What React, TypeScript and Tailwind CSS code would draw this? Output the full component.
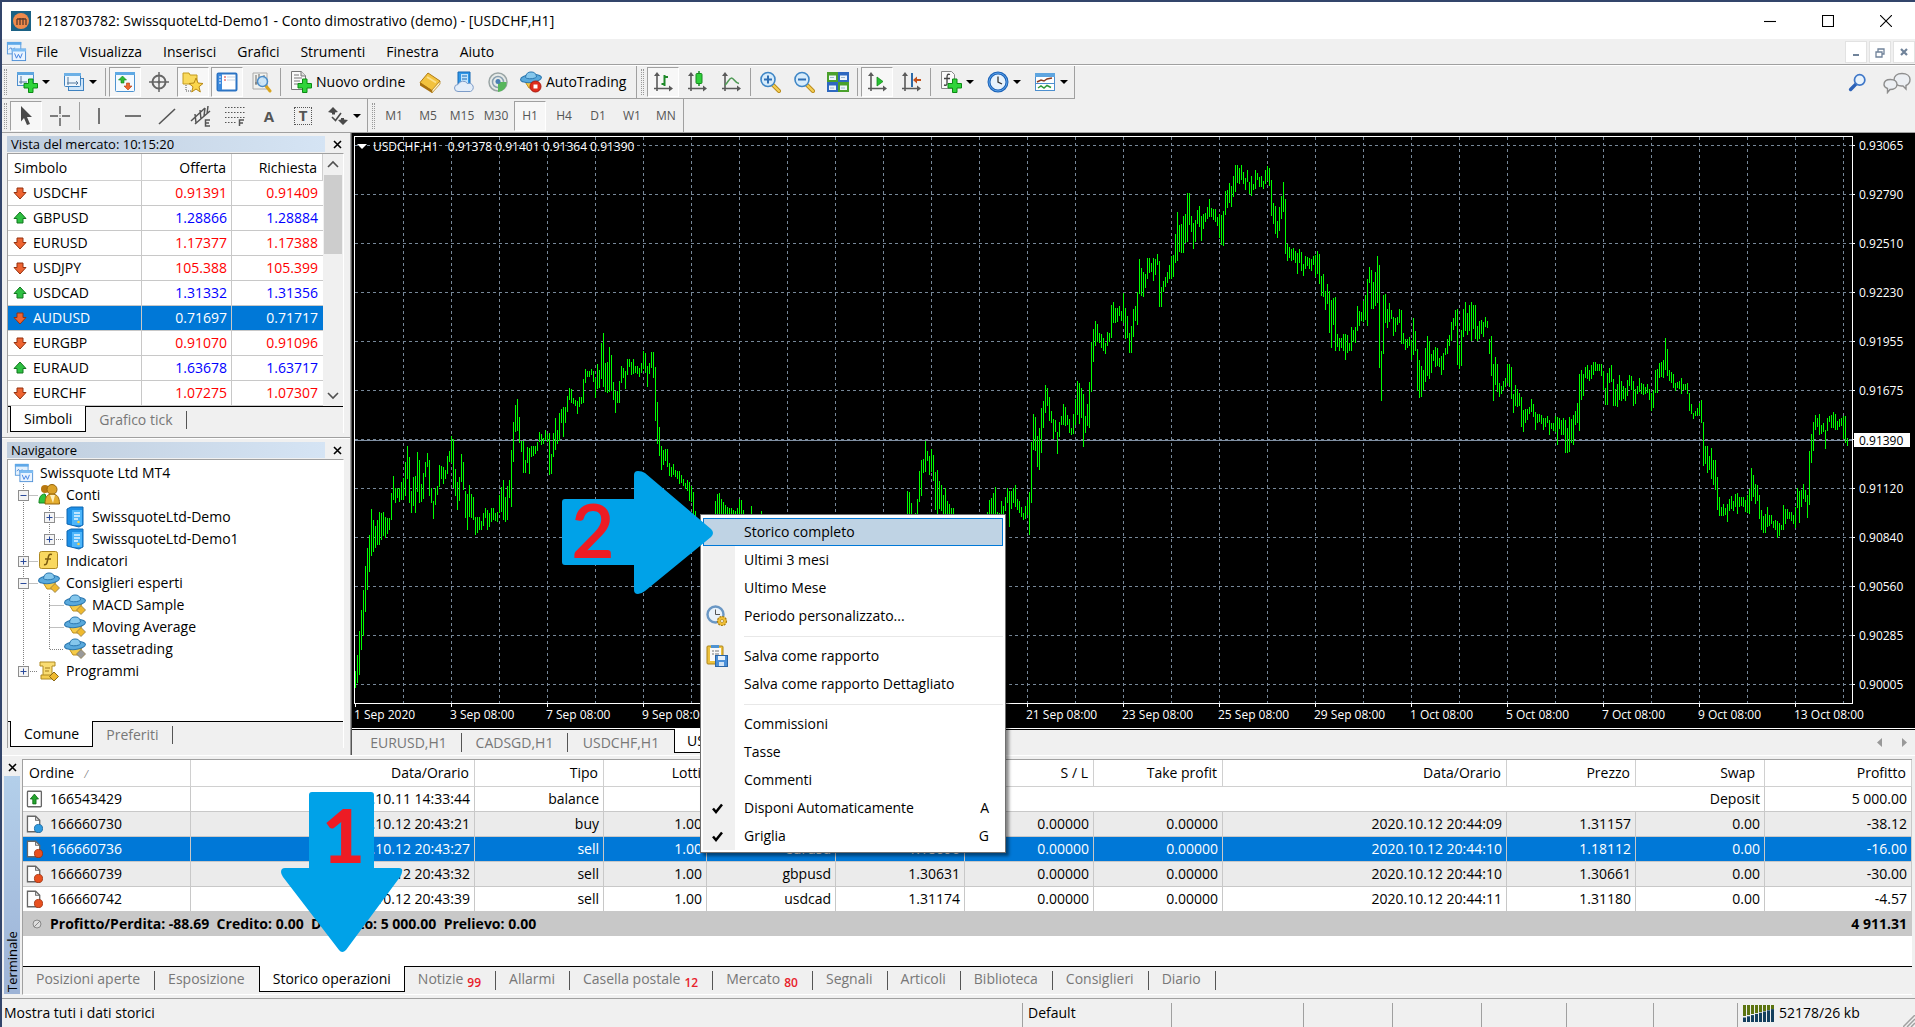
import type { ReactNode } from "react";
import clsx from "clsx";

/* ---------- data ---------- */

const MENUS = ["File", "Visualizza", "Inserisci", "Grafici", "Strumenti", "Finestra", "Aiuto"];

const PERIODS = ["M1", "M5", "M15", "M30", "H1", "H4", "D1", "W1", "MN"];

const QUOTES = [
  { symbol: "USDCHF", bid: "0.91391", ask: "0.91409", up: false },
  { symbol: "GBPUSD", bid: "1.28866", ask: "1.28884", up: true },
  { symbol: "EURUSD", bid: "1.17377", ask: "1.17388", up: false },
  { symbol: "USDJPY", bid: "105.388", ask: "105.399", up: false },
  { symbol: "USDCAD", bid: "1.31332", ask: "1.31356", up: true },
  { symbol: "AUDUSD", bid: "0.71697", ask: "0.71717", up: false, selected: true },
  { symbol: "EURGBP", bid: "0.91070", ask: "0.91096", up: false },
  { symbol: "EURAUD", bid: "1.63678", ask: "1.63717", up: true },
  { symbol: "EURCHF", bid: "1.07275", ask: "1.07307", up: false },
];

const TRADES = [
  { id: "166660730", open: "2020.10.12 20:43:21", type: "buy", symbol: "usdcad", price: "1.31127", close: "2020.10.12 20:44:09", closePrice: "1.31157", profit: "-38.12" },
  { id: "166660736", open: "2020.10.12 20:43:27", type: "sell", symbol: "eurusd", price: "1.18096", close: "2020.10.12 20:44:10", closePrice: "1.18112", profit: "-16.00", selected: true },
  { id: "166660739", open: "2020.10.12 20:43:32", type: "sell", symbol: "gbpusd", price: "1.30631", close: "2020.10.12 20:44:10", closePrice: "1.30661", profit: "-30.00" },
  { id: "166660742", open: "2020.10.12 20:43:39", type: "sell", symbol: "usdcad", price: "1.31174", close: "2020.10.12 20:44:11", closePrice: "1.31180", profit: "-4.57" },
];

const TERMINAL_TABS = [
  { label: "Posizioni aperte" },
  { label: "Esposizione" },
  { label: "Storico operazioni", active: true },
  { label: "Notizie", count: 99 },
  { label: "Allarmi" },
  { label: "Casella postale", count: 12 },
  { label: "Mercato", count: 80 },
  { label: "Segnali" },
  { label: "Articoli" },
  { label: "Biblioteca" },
  { label: "Consiglieri" },
  { label: "Diario" },
];

const PRICES = ["0.93065", "0.92790", "0.92510", "0.92230", "0.91955", "0.91675", "", "0.91120", "0.90840", "0.90560", "0.90285", "0.90005"];

const DATES = [
  "1 Sep 2020", "3 Sep 08:00", "7 Sep 08:00", "9 Sep 08:00", "11 Sep 08:00", "15 Sep 08:00", "17 Sep 08:00", "21 Sep 08:00",
  "23 Sep 08:00", "25 Sep 08:00", "29 Sep 08:00", "1 Oct 08:00", "5 Oct 08:00", "7 Oct 08:00", "9 Oct 08:00", "13 Oct 08:00",
];

// Hourly bars, two units apart: first x, then high-low pairs
const BARS: [number, string][] = [
  [355, "671-688 655-683 631-675 610-650 590-636 566-612 548-590 535-572 509-556 520-552 526-548 520-545 512-545 513-540 512-536 517-538 518-534 518-530 493-520 476-500 488-503 488-498 488-502 482-500 478-500 462-496 446-479 457-503 491-513 477-506 476-513 452-492 460-503 484-502 473-499 462-477 453-467 460-496 488-503 501-519 488-505 486-495 465-487 466-479 467-484 470-479 456-474 451-462 436-463 439-488 469-496 482-510 477-501 454-482 462-490 491-518 494-530 485-517 494-518 497-520 517-535 517-533 517-530 521-530 513-526 508-518 510-530 513-527 508-522 508-520 513-521 512-522 495-513 487-512 480-520 497-522 486-520 480-498"],
  [511, "450-507 422-462 405-432 399-431 417-443 441-452 441-473 460-473 447-463 448-474 446-457 446-456 446-454 442-451 432-442 434-445 438-444 430-440 434-442 433-475 454-474 433-457 418-450 430-444 413-441 409-423 407-437 407-423 396-412 388-400 389-403 398-404 400-406 401-414 397-407 397-404 379-403 369-383 371-377 371-377 369-375 371-382 378-398 364-389 370-388 343-379 333-387 363-392 362-393 347-392 355-391 382-400 391-413 391-403 381-403 366-383 368-378 371-389 359-375 359-367 362-375 359-374 366-373 366-374 368-377 363-373 351-369 353-373 366-387 363-374 352-368 352-378 367-421 402-444 427-456 446-470 450-465 449-461 449-467 463-476 467-477 464-475 470-477 471-479 471-484 475-483 479-486 483-489 480-491 482-501 486-502 492-530 511-540 518-545"],
  [715, "501-525 494-525 493-525 499-525 502-525 505-525 507-525 508-525 508-525 510-525 511-525 508-525 499-525 500-525 510-525"],
  [751, "506-525"],
  [761, "511-525"],
  [907, "491-525 492-525 503-525 514-525 513-525 499-525 471-502 460-496 459-473 441-472 451-461 456-475 449-472 455-481 472-510 470-515 481-509 485-511 495-515 488-515 501-520 504-520 508-520 508-520"],
  [987, "512-525 500-525 498-525 493-525 487-525 512-525 513-525 501-514 506-514 497-511 488-503 491-527 491-509 488-503 485-507 499-510 501-513 507-517 513-520 506-519 500-515 492-535 442-503 414-450 417-451 436-467 428-470 408-453 401-428 385-413 388-406 397-421 411-423 419-439 420-432 432-454 422-437 416-425 404-425 407-426 415-425 419-433 428-435 414-434 399-425 381-415 383-424 388-418 394-447 416-433 404-426 382-428 342-392 329-362 321-346 324-342 333-343 334-348 338-351 343-354 332-346 333-342"],
  [1111, "305-338 302-323 308-323 308-322 306-316 311-321 293-323 308-339 316-338 333-353 326-353 309-337 306-321 292-325 259-294 268-296 272-297 274-288 258-279 258-273 263-272 258-281 259-275 254-265 261-307 287-307 281-292 277-287 272-283 265-279 256-279 255-277 234-263 212-261 225-252 224-253 216-253 214-243 193-242 193-225 216-232 223-249 220-242 210-224 206-227 216-241 214-229 213-222 207-219 199-217 208-217 209-220 209-222 217-226 214-238 215-245 211-246 191-215 190-208 183-203 186-207 176-197 165-192 165-183 168-184 165-180 172-184 178-190 170-182 182-194 176-196 184-190 170-189 173-180 177-187 176-187 181-189 170-184 166-181 168-186"],
  [1271, "180-216 203-224 206-234 221-238 207-231 196-219 182-212 199-254 244-261 247-258 249-261 248-260 251-263 253-274 249-263 252-271 264-276 256-269 257-266 258-269 259-271 256-265 255-277 251-274 254-284 276-296 274-297 291-310 284-304 291-333 300-348 298-325 297-351 334-347 338-351 338-348 334-351 334-360 335-353 343-351 327-351 330-342 327-343 306-331 311-326 312-321 301-322 295-320 279-326 267-283 270-309 282-309 272-306 256-303 265-368 351-401 295-354 294-323 309-328 303-322 310-319 317-336 318-332 317-325 309-323 310-344 333-344 339-350 339-348 337-346 340-360 318-355 331-351 349-391 360-398 366-397 370-390 348-382 336-376 341-379"],
  [1431, "354-373 350-361 347-367 348-366 358-367 356-375 353-370 348-355 339-354 335-346 322-341 318-330 310-326 309-365 345-369 330-366 309-337 302-331 313-335 305-331 302-341 305-329 305-339 326-341 321-339 320-334 322-337 317-327 321-328 339-354 336-376 364-401 357-385 364-392 383-397 386-394 381-390 378-387 364-383 364-387 367-399 394-413 385-406 389-407 393-406 397-427 410-432 409-423 409-420 407-414 399-412 404-417 412-430 414-423 414-422 415-424 418-430 418-427 416-423 420-435 423-429 423-431 416-432 417-445 418-429 420-435 418-435 420-453 428-453 417-452 419-443 415-445 411-425 403-423"],
  [1579, "374-431 370-400 374-396 367-378 365-379 370-381 365-379 362-375 362-371 364-371 364-371 364-376 371-390 388-405 373-405 368-383 365-382 379-406 389-406 384-407 375-400 381-401 386-399 388-401 380-396 375-386 376-390 381-406 389-404 386-394 378-392 383-394 384-395 387-394 384-393 389-400 393-411 390-408 370-393 369-393 363-378 362-377 360-378 338-370 349-376 370-381 372-383 374-388 383-391 382-388 381-389 378-394 384-390 384-390 383-394 393-411 404-414 413-419 411-416 408-416 403-415 400-423 422-466 446-464 446-473 456-470 448-479 460-485 460-490 477-510 497-516 507-516 504-516 508-515 504-522 499-511 496-509 501-511 494-507 493-514"],
  [1739, "497-507 497-506 497-507 500-512 495-513 489-514 468-501 475-497 484-504 485-501 495-519 510-530 516-533 514-533 507-527 515-526 515-524 521-528 520-530 521-538 523-536 525-530 505-530 509-524 509-519 512-519 512-521 515-524 507-528 488-508 491-523 490-507 484-499 490-502 495-518 451-505 434-463 422-451 415-430 418-427 414-435 425-434 423-432 430-449 418-431 416-422 415-428 412-428 414-430 421-430 419-427 418-426 416-439 416-443 438-446"],
];

const BAR_PATH = BARS.map(([start, pairs]) =>
  pairs
    .split(" ")
    .map((pair, i) => {
      const [high, low] = pair.split("-");
      return `M${start + i * 2 + 0.5} ${high}V${low}`;
    })
    .join("")
).join("");

/* ---------- icons ---------- */

function Icon({ size = 22, children }: { size?: number; children: ReactNode }) {
  return (
    <svg width={size} height={size} viewBox="0 0 22 22" fill="none" className="shrink-0" aria-hidden="true">
      {children}
    </svg>
  );
}

function Plus({ x, y }: { x: number; y: number }) {
  return (
    <path
      transform={`translate(${x} ${y})`}
      d="M4.5 0h4.500v4.500H13.500V9H9v4.500H4.500V9H0V4.500h4.500z"
      fill="#2fd43a"
      stroke="#0c8a14"
    />
  );
}

function Caret() {
  return (
    <svg width="8" height="4" viewBox="0 0 8 4" className="shrink-0" aria-hidden="true">
      <path d="M0 0h8L4 4z" fill="#000" />
    </svg>
  );
}

function ChartWindows({ size = 20 }: { size?: number }) {
  return (
    <Icon size={size}>
      <rect x="1.5" y="1.5" width="14" height="12" fill="#e4f1fd" stroke="#5a9bdc" />
      <path d="M1 1h15v3H1z" fill="#5fa8e8" />
      <path d="M3 9l2-2 2 3 2-3" stroke="#4a7fd0" />
      <rect x="6.5" y="8.5" width="14" height="12" fill="#eaf4ff" stroke="#4d8fd6" />
      <path d="M6 8h15v3H6z" fill="#7dbcf2" />
      <path d="M9 13l2 5 2-4 2 4 2-5" stroke="#3f7fe0" />
    </Icon>
  );
}

const Axes = () => (
  <>
    <path d="M5 3v17M2 17.5h17" stroke="#5a5a5a" strokeWidth="1.6" />
    <path d="M5 1l3 4H2zM21 17.5l-4 3v-6z" fill="#5a5a5a" />
  </>
);

const NewChartIcon = () => (
  <Icon>
    <rect x="1.5" y="1.5" width="16" height="13" fill="#eaf4fd" stroke="#4d8fce" />
    <path d="M1 1h17v3H1z" fill="#5ea5e0" />
    <path d="M5 5v8M3 11h8" stroke="#54789c" />
    <Plus x={8} y={8} />
  </Icon>
);

const ProfilesIcon = () => (
  <Icon>
    <rect x="5.5" y="7.5" width="15" height="12" fill="#cfe5f8" stroke="#3f82c0" />
    <rect x="1.5" y="2.5" width="16" height="13" rx="1" fill="#eef6fd" stroke="#3f82c0" />
    <path d="M1 2h17v3H1z" fill="#6cb0e6" />
    <path d="M5 6v8M4 12h11M13 10l2 2-2 2" stroke="#54789c" />
  </Icon>
);

const MarketWatchIcon = () => (
  <Icon>
    <rect x="1.5" y="1.5" width="19" height="19" rx="1" fill="#f4faff" stroke="#4d93d0" />
    <path d="M1 1h20v3H1z" fill="#5ea9e4" />
    <path d="M8.500 5l4 4H10v3H7V9H4.500z" fill="#2dbb35" stroke="#118419" strokeWidth=".6" />
    <path d="M14 19l-4-4h2.500v-3h3v3H18z" fill="#f0682c" stroke="#b03a10" strokeWidth=".6" />
  </Icon>
);

const CrosshairIcon = () => (
  <Icon>
    <circle cx="11" cy="11" r="6.500" stroke="#666" strokeWidth="2" />
    <path d="M11 1v20M1 11h20" stroke="#666" strokeWidth="1.500" />
    <circle cx="11" cy="11" r="1.500" fill="#666" />
  </Icon>
);

const NavigatorIcon = () => (
  <Icon>
    <path d="M1 3V2h6l1 2h7v9H1z" fill="#f9d95c" stroke="#c39a1c" />
    <path d="M4 14v6h5" stroke="#555" strokeDasharray="1 1" />
    <path d="M14 7l2 5 5 .5-4 3.300 1.300 5.200-4.300-3-4.300 3 1.300-5.200-4-3.300 5-.5z" fill="#fbd54a" stroke="#b88916" />
  </Icon>
);

const TerminalIcon = () => (
  <Icon>
    <rect x="1.500" y="2.500" width="19" height="17" rx="1" fill="#fff" stroke="#2c74c4" strokeWidth="2" />
    <path d="M2 3h4v16H2z" fill="#3c8ade" />
    <path d="M3 6h2M3 9h2M3 12h2" stroke="#fff" />
    <path d="M8 6h2M8 9h2" stroke="#d33" />
    <path d="M11 6h8M11 9h8" stroke="#c3d3e4" />
  </Icon>
);

const TesterIcon = () => (
  <Icon>
    <path d="M3 2h14v16H3z" fill="#f2f2ee" stroke="#aaa" />
    <path d="M6 4v10M9 3v5M14 4v4M5 12h6" stroke="#666" />
    <path d="M16 15l4 5" stroke="#d9a520" strokeWidth="3" strokeLinecap="round" />
    <circle cx="12.500" cy="10.500" r="5" fill="#c5e3f8" fillOpacity=".85" stroke="#4b8cc8" strokeWidth="1.500" />
  </Icon>
);

const NewOrderIcon = () => (
  <Icon>
    <path d="M1.500 .5h10l4 4v14h-14z" fill="#fafafa" stroke="#777" />
    <path d="M11 0v5h5" fill="#ddd" stroke="#777" />
    <path d="M4 4h5M4 7h8M4 10h6M4 13h4" stroke="#777" />
    <Plus x={8} y={8} />
  </Icon>
);

const BookIcon = () => (
  <Icon>
    <path d="M1 11.500L9 2l12 8-8 10z" fill="#f2c23e" stroke="#b07b14" />
    <path d="M1 11.500v3l12 7.500v-3z" fill="#a8700f" />
    <path d="M13 19l8-9v3l-8 9z" fill="#fff3c4" stroke="#b07b14" strokeWidth=".7" />
    <path d="M8 6l9 5.500" stroke="#fbe08a" strokeWidth="2" />
  </Icon>
);

const CloudIcon = () => (
  <Icon>
    <path d="M5 1h12v12H5z" fill="#2f97e8" stroke="#1668b4" />
    <path d="M8 3h7v9H8z" fill="#bfe2fb" />
    <path d="M9 5h5M9 8h5" stroke="#1668b4" />
    <path d="M5 20.500a3.500 3.500 0 0 1 0-7 5.500 5.500 0 0 1 9.500-1 4 4 0 0 1 3 8z" fill="#e3edf9" stroke="#7d9cc8" />
  </Icon>
);

const SignalIcon = () => (
  <Icon>
    <circle cx="11" cy="11" r="9" fill="#e6eae8" stroke="#9aa5a5" strokeWidth="1.500" />
    <circle cx="11" cy="11" r="5.500" stroke="#8aa0b0" strokeWidth="1.500" />
    <path d="M11 11h8.500a9 9 0 0 1-8.500 10z" fill="#58b65c" />
    <circle cx="11" cy="10.500" r="2.500" fill="#4a7fb4" />
  </Icon>
);

function ExpertHat({ badge = "#efb92e", stop = false }: { badge?: string; stop?: boolean }) {
  return (
    <Icon>
      <path d="M4 9l5 8h6l3-8z" fill="#f6cb48" stroke="#c08f1a" />
      <ellipse cx="11" cy="7.500" rx="10.500" ry="4" fill="#59a9dc" stroke="#2c78b0" transform="rotate(-6 11 7.500)" />
      <path d="M5.500 6.500C6 2.500 8 1 11 1s5 1 5.500 5c-2 2-9 2.500-11 .5z" fill="#85c7ec" stroke="#2c78b0" />
      {stop ? (
        <>
          <circle cx="15.500" cy="15.500" r="5.500" fill="#df2c1c" stroke="#a81a10" />
          <path d="M13.500 13.500h4v4h-4z" fill="#fff" />
        </>
      ) : (
        <path d="M17 11.500l4.500 4.500-4.500 4.500-4.500-4.500z" fill={badge} stroke="#8d7a46" strokeWidth=".8" />
      )}
    </Icon>
  );
}

const BarsIcon = () => (
  <Icon>
    <Axes />
    <path d="M12.500 4v11M9.500 13h3M12.500 6H16" stroke="#1f8a2a" strokeWidth="2" />
  </Icon>
);

const CandlesIcon = () => (
  <Icon>
    <Axes />
    <path d="M13 0v15" stroke="#178a20" strokeWidth="1.500" />
    <rect x="10" y="2.500" width="6" height="10" rx="1" fill="#2fcf3a" stroke="#178a20" />
  </Icon>
);

const LineIcon = () => (
  <Icon>
    <Axes />
    <path d="M5 14c3-2 4-7 6.500-7S15 12 19 12.500" stroke="#4f9a55" strokeWidth="1.600" />
  </Icon>
);

function ZoomIcon({ plus }: { plus?: boolean }) {
  return (
    <Icon>
      <path d="M14 14l6 6" stroke="#b98a1a" strokeWidth="4" strokeLinecap="round" />
      <path d="M14 14l6 6" stroke="#f5cf55" strokeWidth="2.200" strokeLinecap="round" />
      <circle cx="9" cy="8.500" r="7" fill="#d7ecfb" stroke="#3f86c6" strokeWidth="1.600" />
      <path d="M5 8.500h8" stroke="#2f6fb4" strokeWidth="2" />
      {plus && <path d="M9 4.500v8" stroke="#2f6fb4" strokeWidth="2" />}
    </Icon>
  );
}

const TileIcon = () => (
  <Icon>
    <path d="M0 1h11v10H0zM11 11h11v10H11z" fill="#4aa02c" />
    <path d="M11 1h11v10H11zM0 11h11v10H0z" fill="#2e68c0" />
    <path d="M2 4.500h7v4.500H2zM13 4.500h7v4.500h-7zM2 14.500h7V19H2zM13 14.500h7V19h-7z" fill="#eef5fb" />
    <path d="M3 6.500h4M14 6.500h4M3 17h4M14 17h4" stroke="#9cb8d0" />
  </Icon>
);

const ScrollIcon = () => (
  <Icon>
    <Axes />
    <path d="M11 6l6 4.500-6 4.500z" fill="#27c232" stroke="#148a1c" strokeWidth=".8" />
  </Icon>
);

const ShiftIcon = () => (
  <Icon>
    <Axes />
    <path d="M12 2v14" stroke="#2b6aa8" strokeWidth="2" />
    <path d="M13 9l4-3.500V8h4v2h-4v2.500z" fill="#c2501c" />
  </Icon>
);

const IndicatorsIcon = () => (
  <Icon>
    <path d="M1.500 .5h10l3 3v14h-13z" fill="#fafafa" stroke="#888" />
    <path d="M10 3.500C7 2.500 7 4.500 7 7.500v5c0 2-1 2-3 1.500M4 7.500h6" stroke="#444" strokeWidth="1.300" />
    <Plus x={8} y={8} />
  </Icon>
);

const ClockIcon = () => (
  <Icon>
    <circle cx="11" cy="11" r="9" fill="#e7f2fc" stroke="#1d63b8" strokeWidth="3" />
    <circle cx="11" cy="11" r="9" stroke="#5aa2ea" />
    <path d="M11 5.500V11l4 2" stroke="#333" strokeWidth="1.300" />
  </Icon>
);

const TemplateIcon = () => (
  <Icon>
    <rect x="1.500" y="2.500" width="19" height="17" fill="#fff" stroke="#4d8fce" />
    <path d="M1 2h20v4H1z" fill="#5ea5e0" />
    <path d="M3 11l4-2 3 1 3-2 5-1" stroke="#8a3a20" strokeWidth="1.500" />
    <path d="M1 12.500h20" stroke="#4d8fce" />
    <path d="M4 17l3-2 3 2 3-2.500 4 2" stroke="#2f9a3a" strokeWidth="1.500" />
  </Icon>
);

const CursorIcon = () => (
  <Icon>
    <path d="M6 1l11 11h-5l3 7-3 1-3-7-3 3.500z" fill="#4a4a4a" />
  </Icon>
);

const ThinCrossIcon = () => (
  <Icon>
    <path d="M11 1v8M11 13v8M1 11h8M13 11h8" stroke="#555" strokeWidth="1.400" />
    <path d="M10.500 10.500h1v1h-1z" fill="#555" />
  </Icon>
);

const StrokeIcon = ({ d }: { d: string }) => (
  <Icon>
    <path d={d} stroke="#555" strokeWidth="1.600" />
  </Icon>
);

const FiboIcon = () => (
  <Icon>
    <path d="M1 2.500h20M1 7.500h20M1 12.500h20M1 17.500h12" stroke="#555" strokeDasharray="1.500 1.500" />
    <path d="M15.500 21v-6H20M15.500 18h3.500" stroke="#555" strokeWidth="1.500" />
  </Icon>
);

const ChannelIcon = () => (
  <Icon>
    <path d="M1 16L15 3M5 19L20 6M5 9l1 9M10 5l1 9M15 3l-1 8M18 1l-1 8" stroke="#555" strokeWidth="1.500" />
    <path d="M20 15h-4.500v6H20M15.500 18H19" stroke="#555" strokeWidth="1.500" />
  </Icon>
);

const ArrowsIcon = () => (
  <Icon>
    <path d="M6 2l5 5-3 .5V9.500H5V8L1 7z" fill="#4a4a4a" />
    <path d="M5 12l3.500 3.500L14 8" stroke="#4a4a4a" strokeWidth="1.600" />
    <path d="M16 20l-5-5 3-.5V13h3v1.500l4 .5z" fill="#4a4a4a" />
  </Icon>
);

function TickArrow({ up }: { up: boolean }) {
  return (
    <svg width="14" height="14" viewBox="0 0 14 14" className="shrink-0" aria-hidden="true">
      {up ? (
        <path d="M7 1l6 6.500h-3V12H4V7.500H1z" fill="#2fc043" stroke="#13761f" />
      ) : (
        <path d="M7 13L1 6.500h3V2h6v4.500h3z" fill="#ee6432" stroke="#94310f" />
      )}
    </svg>
  );
}

function OrderIcon({ type }: { type: string }) {
  if (type === "balance") {
    return (
      <Icon size={18}>
        <rect x="3" y="1.500" width="17" height="19" rx="1" fill="#fff" stroke="#666" strokeWidth="1.600" />
        <path d="M11.500 5l5 6h-3v6h-4v-6h-3z" fill="#24a52e" stroke="#0f6d17" />
      </Icon>
    );
  }
  return (
    <Icon size={18}>
      <path d="M3 1.500h10l5 5v14H3z" fill="#fdfdfd" stroke="#666" strokeWidth="1.600" />
      <path d="M13 1.500v5h5" stroke="#666" strokeWidth="1.300" />
      <circle cx="16.500" cy="16.500" r="5" fill={type === "buy" ? "#2f9be0" : "#e8501f"} stroke={type === "buy" ? "#12639f" : "#a02f0b"} />
    </Icon>
  );
}

const AccountsIcon = () => (
  <Icon>
    <circle cx="7" cy="5" r="4" fill="#b9780f" />
    <circle cx="14" cy="5.500" r="5" fill="#dca228" stroke="#96650c" />
    <path d="M1 19c0-6 2-9 6-9l3 9z" fill="#2fc43c" stroke="#168420" />
    <path d="M7 20c0-7 2-10 7-10s7.500 3 7.500 10z" fill="#e4ad2e" stroke="#96650c" />
    <path d="M12 11l3 8 2-8z" fill="#fff0bf" />
  </Icon>
);

const ServerIcon = () => (
  <Icon>
    <path d="M3 3l4-2h12v18l-4 2-12-3z" fill="#1d8fe6" stroke="#0f66b0" />
    <path d="M8 4h10v15H8z" fill="#4db6fb" />
    <path d="M10 7h6M10 10h6M10 13h4" stroke="#e8f6ff" strokeWidth="1.500" />
    <circle cx="14.500" cy="16" r="1.300" fill="#f8d24a" />
  </Icon>
);

const FunctionIcon = () => (
  <Icon>
    <rect x="1.500" y="1.500" width="18" height="17" rx="2" fill="#f9d860" stroke="#b08a22" />
    <path d="M14 4.500c-3-1-3.500 1-4 4l-1 4c-.5 2-1.500 2.500-3 2M7 9h6" stroke="#7a5a10" strokeWidth="1.500" />
  </Icon>
);

const ScriptIcon = () => (
  <Icon>
    <path d="M2 2h15v4h-3v10H5V6H2z" fill="#f9dc72" stroke="#b08a22" />
    <path d="M3 15h11v4H3z" fill="#f4cd50" stroke="#b08a22" />
    <path d="M7 8h5M7 11h4" stroke="#a07a1a" />
    <path d="M16 12l4.500 4.500L16 21l-4.500-4.500z" fill="#efb92e" stroke="#8d6a16" />
  </Icon>
);

const PeriodIcon = () => (
  <Icon>
    <circle cx="9.500" cy="9.500" r="8" fill="#e9f2fa" stroke="#6a97c4" strokeWidth="2.400" />
    <path d="M9.500 4.500v5H14" stroke="#555" />
    <circle cx="16" cy="16" r="4.500" fill="#f0bf35" stroke="#a87c12" strokeWidth="1.200" strokeDasharray="2 1" />
    <circle cx="16" cy="16" r="1.500" fill="#fff" stroke="#a87c12" strokeWidth=".7" />
  </Icon>
);

const ReportIcon = () => (
  <Icon>
    <rect x="1" y="1" width="16" height="18" rx="1" fill="#edc23e" stroke="#ad8418" />
    <path d="M4 3h11v13H4z" fill="#fafafa" />
    <path d="M5 0h8v3H5z" fill="#4f93d2" />
    <path d="M6 6h2M9 6h4M6 9h2M9 9h4" stroke="#777" />
    <rect x="9.500" y="10.500" width="12" height="11" fill="#4a8fd8" stroke="#2a64a4" />
    <path d="M12 11h7v4h-7z" fill="#e7f1fb" />
    <path d="M13 17h5v4h-5z" fill="#cfe2f5" />
  </Icon>
);

/* ---------- shared parts ---------- */

function ToolButton({ label, active, drop, children }: { label: string; active?: boolean; drop?: boolean; children: ReactNode }) {
  return (
    <button
      type="button"
      aria-label={label}
      className={clsx(
        "flex h-[30px] shrink-0 items-center justify-center",
        drop ? "w-[47px] gap-1" : "mx-px w-8",
        active && "border border-[#a0a0a0] border-r-white border-b-white bg-[#f7f7f7]"
      )}
    >
      {children}
      {drop && <Caret />}
    </button>
  );
}

const Grip = () => <span className="mr-0.5 h-[26px] w-[3px] shrink-0 border-x border-dotted border-[#999]" />;
const Divider = () => <span className="mx-0.5 h-7 w-px shrink-0 bg-[#a0a0a0]" />;

function PanelCaption({ title }: { title: string }) {
  return (
    <div className="-mr-[5px] flex h-[18px] items-center">
      <h2 className="h-4 flex-1 bg-linear-to-r from-[#bfcddd] to-[#d5e4f4] pl-1 text-[13px] leading-4">{title}</h2>
      <CloseButton />
    </div>
  );
}

function CloseButton() {
  return (
    <button type="button" aria-label="Chiudi" className="flex w-6 justify-center">
      <svg width="9" height="9" viewBox="0 0 9 9" aria-hidden="true">
        <path d="M1 1l7 7M8 1L1 8" stroke="#000" strokeWidth="1.600" />
      </svg>
    </button>
  );
}

function SideTabs({ active, other }: { active: string; other: string }) {
  return (
    <div className="flex h-[27px] border-t border-black pl-0.5">
      <button type="button" className="-mt-px h-[26px] border border-t-0 border-black bg-white px-[13px] leading-6">{active}</button>
      <button type="button" className="my-1 border-r border-[#555] px-[13px] leading-4 text-[#777]">{other}</button>
    </div>
  );
}

/* ---------- bars at the top ---------- */

function TitleBar() {
  return (
    <header className="flex h-[37px] items-center bg-white pl-[9px] text-[14px]">
      <svg width="20" height="20" viewBox="0 0 20 20" aria-hidden="true">
        <path d="M0 0h20v20H0z" fill="#1b6184" />
        <circle cx="10" cy="10" r="8" fill="#f08a4b" />
        <path d="M6 14V8M9 14V7M12 14V7M15 14V8M6 8h9" stroke="#5b3a2c" strokeWidth="1.300" />
      </svg>
      <h1 className="flex-1 pl-[5px]">1218703782: SwissquoteLtd-Demo1 - Conto dimostrativo (demo) - [USDCHF,H1]</h1>
      {["M0 6.500h12", "M.5 .5h11v11H.5z", "M0 0l12 12M12 0L0 12"].map((d, i) => (
        <button key={d} type="button" aria-label={["Riduci", "Ingrandisci", "Chiudi"][i]} className="flex w-[58px] justify-center">
          <svg width="12" height="12" viewBox="0 0 12 12" fill="none" aria-hidden="true">
            <path d={d} stroke="#000" strokeWidth="1.100" />
          </svg>
        </button>
      ))}
    </header>
  );
}

function MenuBar() {
  return (
    <nav className="flex h-[26px] items-center border-b border-[#a0a0a0] pl-1">
      <ChartWindows size={21} />
      <div className="flex flex-1 gap-[21px] pl-[9px]">
        {MENUS.map((menu) => (
          <button key={menu} type="button">{menu}</button>
        ))}
      </div>
      {["M3 8h6v2H3z", "M2 6h6v5H2zM4 6V3h6v5H8", "M3 3l6 6M9 3l-6 6"].map((d, i) => (
        <button
          key={d}
          type="button"
          aria-label={["Riduci grafico", "Ripristina grafico", "Chiudi grafico"][i]}
          className="mr-0.5 flex h-[22px] w-[22px] items-center justify-center border border-[#e2e2e2] bg-white last:mr-0"
        >
          <svg width="12" height="12" viewBox="0 0 12 12" fill={i === 0 ? "#70839a" : "none"} aria-hidden="true">
            <path d={d} stroke="#70839a" strokeWidth={i === 0 ? 0 : i === 1 ? 1.3 : 2.2} />
          </svg>
        </button>
      ))}
    </nav>
  );
}

function MainToolbar() {
  return (
    <div className="flex h-[34px] items-center border-t border-white">
      <div className="flex h-full items-center border-r border-b border-[#a0a0a0] pl-0.5">
        <Grip />
        <ToolButton label="Nuovo grafico" drop><NewChartIcon /></ToolButton>
        <ToolButton label="Profili" drop><ProfilesIcon /></ToolButton>
        <Divider />
        <ToolButton label="Vista del mercato" active><MarketWatchIcon /></ToolButton>
        <ToolButton label="Finestra dati"><CrosshairIcon /></ToolButton>
        <ToolButton label="Navigatore" active><NavigatorIcon /></ToolButton>
        <ToolButton label="Terminale" active><TerminalIcon /></ToolButton>
        <ToolButton label="Tester di strategia"><TesterIcon /></ToolButton>
        <Divider />
        <button type="button" className="flex w-[130px] items-center gap-1 pl-[7px] whitespace-nowrap">
          <NewOrderIcon />
          Nuovo ordine
        </button>
        <ToolButton label="MetaEditor"><BookIcon /></ToolButton>
        <ToolButton label="VPS"><CloudIcon /></ToolButton>
        <ToolButton label="Segnali"><SignalIcon /></ToolButton>
        <button type="button" className="flex w-[121px] items-center gap-1 pl-[5px] whitespace-nowrap">
          <ExpertHat stop />
          AutoTrading
        </button>
      </div>
      <div className="flex h-full items-center border-r border-b border-[#a0a0a0] pl-1">
        <Grip />
        <ToolButton label="Grafico a barre" active><BarsIcon /></ToolButton>
        <ToolButton label="Candele"><CandlesIcon /></ToolButton>
        <ToolButton label="Linea"><LineIcon /></ToolButton>
        <Divider />
        <ToolButton label="Ingrandisci"><ZoomIcon plus /></ToolButton>
        <ToolButton label="Rimpicciolisci"><ZoomIcon /></ToolButton>
        <ToolButton label="Affianca"><TileIcon /></ToolButton>
        <Divider />
        <ToolButton label="Scorrimento automatico" active><ScrollIcon /></ToolButton>
        <ToolButton label="Spostamento grafico"><ShiftIcon /></ToolButton>
        <Divider />
        <ToolButton label="Indicatori" drop><IndicatorsIcon /></ToolButton>
        <ToolButton label="Periodi" drop><ClockIcon /></ToolButton>
        <ToolButton label="Modelli" drop><TemplateIcon /></ToolButton>
      </div>
      <div className="flex flex-1 items-center justify-end gap-4 pr-1">
        <button type="button" aria-label="Cerca">
          <Icon size={19}>
            <path d="M3 19l7-7" stroke="#2c62b8" strokeWidth="4" strokeLinecap="round" />
            <circle cx="13.500" cy="8" r="6" fill="#e9f3fc" stroke="#3f77c8" strokeWidth="2" />
          </Icon>
        </button>
        <button type="button" aria-label="Comunità">
          <svg width="28" height="22" viewBox="0 0 28 22" fill="#eceff3" stroke="#8e8e8e" strokeWidth="1.400" aria-hidden="true">
            <path d="M11 8c0-4 3-6.500 8-6.500s8 2.500 8 6c0 3-1.500 5-4 6v3.500l-3-3c-5 .5-9-2-9-6z" />
            <path d="M1 12.500c0-3 2.500-5 6.500-5s6.500 2 6.500 5-3 5-7 5l-2.500 3v-4C2 15.500 1 14.500 1 12.500z" />
          </svg>
        </button>
      </div>
    </div>
  );
}

function DrawingToolbar() {
  return (
    <div className="flex h-[34px] items-center border-b border-[#a0a0a0]">
      <div className="flex h-full items-center border-r border-[#a0a0a0] pl-0.5">
        <Grip />
        <ToolButton label="Cursore" active><CursorIcon /></ToolButton>
        <ToolButton label="Mirino"><ThinCrossIcon /></ToolButton>
        <Divider />
        <ToolButton label="Linea verticale"><StrokeIcon d="M11 3v16" /></ToolButton>
        <ToolButton label="Linea orizzontale"><StrokeIcon d="M3 11h16" /></ToolButton>
        <ToolButton label="Linea di tendenza"><StrokeIcon d="M3 19L19 4" /></ToolButton>
        <ToolButton label="Canale equidistante"><ChannelIcon /></ToolButton>
        <ToolButton label="Ritracciamento di Fibonacci"><FiboIcon /></ToolButton>
        <ToolButton label="Testo"><span className="text-[15px] font-bold text-[#555]">A</span></ToolButton>
        <ToolButton label="Etichetta">
          <span className="flex h-[18px] w-[18px] items-center justify-center border border-dotted border-[#555] text-[15px] leading-none font-bold text-[#555]">T</span>
        </ToolButton>
        <ToolButton label="Frecce" drop><ArrowsIcon /></ToolButton>
      </div>
      <div className="flex h-full items-center border-r border-[#a0a0a0] pl-1">
        <Grip />
        {PERIODS.map((period) => (
          <ToolButton key={period} label={period} active={period === "H1"}>
            <span className="text-[12px] font-medium text-[#555]">{period}</span>
          </ToolButton>
        ))}
      </div>
    </div>
  );
}

/* ---------- left column ---------- */

function MarketWatch() {
  return (
    <section className="border-b border-[#a0a0a0] pt-0.5 pr-1.5 pb-1 pl-[5px]">
      <PanelCaption title="Vista del mercato: 10:15:20" />
      <div className="border-t border-l border-[#a0a0a0] border-r border-r-white">
        <div className="flex bg-white">
          <table className="flex-1 border-separate border-spacing-0">
            <thead>
              <tr>
                <th className="h-[27px] w-[134px] border-r border-b border-[#d0d0d0] pt-px pl-1.5 text-left font-normal">Simbolo</th>
                <th className="w-[90px] border-r border-b border-[#d0d0d0] pt-px pr-[5px] text-right font-normal">Offerta</th>
                <th className="border-r border-b border-[#d0d0d0] pt-px pr-[5px] text-right font-normal">Richiesta</th>
              </tr>
            </thead>
            <tbody>
              {QUOTES.map((q) => (
                <tr
                  key={q.symbol}
                  className={clsx(q.selected ? "bg-[#0078d7] text-white" : q.up ? "text-[#0000ff]" : "text-[#ff0000]")}
                >
                  <td className={clsx("h-[25px] border-r border-b border-[#c8c8c8] pl-[5px]", !q.selected && "text-black")}>
                    <span className="flex items-center gap-1.5 leading-5">
                      <TickArrow up={q.up} />
                      {q.symbol}
                    </span>
                  </td>
                  <td className="border-r border-b border-[#c8c8c8] pr-1 text-right leading-5">{q.bid}</td>
                  <td className="border-b border-[#c8c8c8] pr-[5px] text-right leading-5">{q.ask}</td>
                </tr>
              ))}
            </tbody>
          </table>
          <div className="flex w-5 flex-col items-center bg-[#f0f0f0]">
            <svg width="20" height="21" viewBox="0 0 20 21" fill="none" aria-hidden="true">
              <path d="M5 13l5-5 5 5" stroke="#505050" strokeWidth="1.600" />
            </svg>
            <span className="h-[79px] w-[18px] bg-[#cdcdcd]" />
            <span className="flex-1" />
            <svg width="20" height="21" viewBox="0 0 20 21" fill="none" aria-hidden="true">
              <path d="M5 8l5 5 5-5" stroke="#505050" strokeWidth="1.600" />
            </svg>
          </div>
        </div>
        <SideTabs active="Simboli" other="Grafico tick" />
      </div>
    </section>
  );
}

type Node = { label: string; icon: ReactNode; depth: number; mark?: "+" | "-"; last?: boolean };

const NODES: Node[] = [
  { label: "Conti", icon: <AccountsIcon />, depth: 1, mark: "-" },
  { label: "SwissquoteLtd-Demo", icon: <ServerIcon />, depth: 2, mark: "+" },
  { label: "SwissquoteLtd-Demo1", icon: <ServerIcon />, depth: 2, mark: "+", last: true },
  { label: "Indicatori", icon: <FunctionIcon />, depth: 1, mark: "+" },
  { label: "Consiglieri esperti", icon: <ExpertHat />, depth: 1, mark: "-" },
  { label: "MACD Sample", icon: <ExpertHat />, depth: 2 },
  { label: "Moving Average", icon: <ExpertHat />, depth: 2 },
  { label: "tassetrading", icon: <ExpertHat badge="#9a9a9a" />, depth: 2, last: true },
  { label: "Programmi", icon: <ScriptIcon />, depth: 1, mark: "+", last: true },
];

function Guide({ mark, last }: { mark?: "+" | "-"; last?: boolean }) {
  return (
    <svg width="30" height="22" viewBox="0 0 30 22" fill="none" className="shrink-0" aria-hidden="true">
      <path d={last ? "M15.500 0v11.500H30" : "M15.500 0v22M15.500 11.500H30"} stroke="#808080" strokeDasharray="1 1" />
      {mark && <rect x="10.500" y="6.500" width="10" height="10" fill="#f4f4f4" stroke="#8e8e8e" />}
      {mark && <path d={mark === "+" ? "M12.500 11.500h6M15.500 8.500v6" : "M12.500 11.500h6"} stroke="#2a4a9a" />}
    </svg>
  );
}

function Navigator() {
  return (
    <section className="flex flex-1 flex-col border-t border-white pt-0.5 pr-1.5 pb-[7px] pl-[5px]">
      <PanelCaption title="Navigatore" />
      <div className="flex flex-1 flex-col border-t border-r border-l border-[#a0a0a0] border-r-white">
        <ul className="flex-1 bg-white pt-0.5">
          <li className="flex h-[22px] items-center gap-1.5 pl-1.5">
            <ChartWindows />
            Swissquote Ltd MT4
          </li>
          {NODES.map((node) => (
            <li key={node.label} className="flex h-[22px] items-center">
              {node.depth === 2 && (
                <svg width="26" height="22" viewBox="0 0 26 22" className="shrink-0" aria-hidden="true">
                  <path d="M15.500 0v22" stroke="#808080" strokeDasharray="1 1" />
                </svg>
              )}
              <Guide mark={node.mark} last={node.last} />
              {node.icon}
              <span className="pl-1.5">{node.label}</span>
            </li>
          ))}
        </ul>
        <SideTabs active="Comune" other="Preferiti" />
      </div>
    </section>
  );
}

/* ---------- chart ---------- */

function PriceChart() {
  const rows = PRICES.map((_, i) => 145 + i * 49);
  const cols = Array.from({ length: 31 }, (_, i) => 403 + i * 48);
  return (
    <svg viewBox="352 133 1563 595" className="block w-full bg-black font-['Open_Sans',sans-serif]" role="img" aria-label="USDCHF,H1">
      <g shapeRendering="crispEdges" fill="none">
        <path d={rows.map((y) => `M355 ${y + 0.5}H1852`).join("")} stroke="#778899" strokeDasharray="3 3" />
        <path d={cols.map((x) => `M${x + 0.5} 137V703`).join("")} stroke="#778899" strokeDasharray="3 3" />
        <path d="M354 440.500H1852" stroke="#8090a4" />
        <path d={BAR_PATH} stroke="#00ff00" />
        <path d="M354.500 703.500V136.500H1852.500V703.500Z" stroke="#fff" />
        <path d={rows.map((y) => `M1853 ${y + 0.5}h2`).join("")} stroke="#fff" />
        <path d={DATES.map((_, i) => `M${355.5 + i * 96} 704v3`).join("")} stroke="#fff" />
      </g>
      <g fill="#fff" fontSize="12">
        {PRICES.map((price, i) => (
          <text key={i} x="1859" y={150 + i * 49}>{price}</text>
        ))}
        {DATES.map((date, i) => (
          <text key={date} x={354 + i * 96} y="719">{date}</text>
        ))}
        <path d="M357 144h10l-5 5z" />
        <text x="373" y="151">USDCHF,H1&nbsp;&nbsp; 0.91378 0.91401 0.91364 0.91390</text>
      </g>
      <path d="M1854 433h56v14h-56z" fill="#fff" />
      <text x="1859" y="445" fontSize="12" fill="#000">0.91390</text>
    </svg>
  );
}

function ChartTabs() {
  return (
    <div className="flex h-[26px] border-t border-black pl-1">
      {["EURUSD,H1", "CADSGD,H1", "USDCHF,H1"].map((tab) => (
        <button key={tab} type="button" className="my-[3px] w-[106px] border-r border-[#555] text-center leading-4 text-[#777] nth-3:border-r-0">
          {tab}
        </button>
      ))}
      <button type="button" className="-mt-px h-6 w-[107px] border border-t-0 border-black bg-white px-3 text-left leading-5">USDCHF,H1</button>
      <div className="flex flex-1 items-center justify-end gap-5 pr-2">
        <svg width="5" height="9" viewBox="0 0 5 9" aria-hidden="true"><path d="M5 0v9L0 4.500z" fill="#999" /></svg>
        <svg width="5" height="9" viewBox="0 0 5 9" aria-hidden="true"><path d="M0 0v9l5-4.500z" fill="#999" /></svg>
      </div>
    </div>
  );
}

/* ---------- terminal ---------- */

const HEADERS = ["Data/Orario", "Tipo", "Lotti", "Simbolo", "Prezzo", "S / L", "Take profit", "Data/Orario", "Prezzo", "Swap", "Profitto"];

function HistoryTable() {
  const cell = "border-r border-b border-[#c8c8c8] pr-1 text-right";
  return (
    <table className="w-full table-fixed border-separate border-spacing-0 leading-5">
      <colgroup>
        <col className="w-[168px]" />
        <col className="w-[284px]" />
        <col className="w-[129px]" />
        <col className="w-[103px]" />
        <col className="w-[129px]" />
        <col className="w-[129px]" />
        <col className="w-[129px]" />
        <col className="w-[129px]" />
        <col className="w-[284px]" />
        <col className="w-[129px]" />
        <col className="w-[129px]" />
        <col />
      </colgroup>
      <thead>
        <tr>
          <th className="h-[27px] border-r border-b border-[#d0d0d0] pl-1.5 text-left font-normal">
            Ordine <span className="pl-2 text-[10px] text-[#777]">⁄</span>
          </th>
          {HEADERS.map((title, i) => (
            <th
              key={i}
              className={clsx("border-r border-b border-[#d0d0d0] text-right font-normal", title === "Swap" ? "pr-[9px]" : "pr-[5px]")}
            >
              {title}
            </th>
          ))}
        </tr>
      </thead>
      <tbody>
        <tr className="h-[25px]">
          <td className="h-[25px] border-r border-b border-[#c8c8c8] pl-0.5">
            <span className="flex items-center gap-[7px]"><OrderIcon type="balance" />166543429</span>
          </td>
          <td className={cell}>2020.10.11 14:33:44</td>
          <td className={cell}>balance</td>
          <td className={cell} colSpan={8}>Deposit</td>
          <td className={cell}>5 000.00</td>
        </tr>
        {TRADES.map((t) => (
          <tr key={t.id} className={clsx(t.selected ? "bg-[#0078d7] text-white" : "odd:bg-white even:bg-[#ebebeb]")}>
            <td className="h-[25px] border-r border-b border-[#c8c8c8] pl-0.5">
              <span className="flex items-center gap-[7px]"><OrderIcon type={t.type} />{t.id}</span>
            </td>
            <td className={cell}>{t.open}</td>
            <td className={cell}>{t.type}</td>
            <td className={cell}>1.00</td>
            <td className={cell}>{t.symbol}</td>
            <td className={cell}>{t.price}</td>
            <td className={cell}>0.00000</td>
            <td className={cell}>0.00000</td>
            <td className={cell}>{t.close}</td>
            <td className={cell}>{t.closePrice}</td>
            <td className={cell}>0.00</td>
            <td className={cell}>{t.profit}</td>
          </tr>
        ))}
      </tbody>
      <tfoot>
        <tr className="bg-[#c8c8c8] font-bold">
          <td colSpan={11} className="h-6 pl-[9px]">
            <span className="flex items-center gap-2 whitespace-pre">
              <svg width="10" height="10" viewBox="0 0 10 10" fill="none" aria-hidden="true">
                <circle cx="5" cy="5" r="4" fill="#ddd" stroke="#888" />
                <path d="M2 8l6-6" stroke="#888" />
              </svg>
              {"Profitto/Perdita: -88.69  Credito: 0.00  Deposito: 5 000.00  Prelievo: 0.00"}
            </span>
          </td>
          <td className="pr-[5px] text-right">4 911.31</td>
        </tr>
      </tfoot>
    </table>
  );
}

function Terminal() {
  return (
    <section className="flex border-t border-white pt-[3px] pr-[3px]">
      <div className="flex w-5 flex-col items-center border-b border-transparent pt-1">
        <CloseButton />
        <h2 className="mt-1 flex w-4 flex-1 rotate-180 items-start bg-linear-to-t from-[#b3cfea] to-[#9db3d6] pt-0.5 pl-px text-[13px] leading-4 [writing-mode:vertical-rl]">
          Terminale
        </h2>
      </div>
      <div className="min-w-0 flex-1 border-t border-b border-l border-[#a0a0a0] border-b-white">
        <div className="bg-white pb-[30px]">
          <HistoryTable />
        </div>
        <div className="flex h-7 border-t border-black">
          {TERMINAL_TABS.map((tab) =>
            tab.active ? (
              <button key={tab.label} type="button" className="-mt-px h-[26px] border border-t-0 border-black bg-white px-[13px] leading-6">
                {tab.label}
              </button>
            ) : (
              <button
                key={tab.label}
                type="button"
                className="my-1 flex border-r border-[#555] pr-[14px] pl-[13px] leading-4 text-[#777] nth-2:border-r-0"
              >
                {tab.label}
                {tab.count && <span className="pt-1 pl-1 text-[12px] font-semibold text-[#e8202a]">{tab.count}</span>}
              </button>
            )
          )}
        </div>
      </div>
    </section>
  );
}

function StatusBar() {
  const cell = "h-6 border-l border-[#a0a0a0]";
  return (
    <footer className="mt-[3px] flex h-[29px] items-end border-t border-[#a0a0a0]">
      <span className="h-6 flex-1 pl-0.5">Mostra tuti i dati storici</span>
      <span className={clsx(cell, "w-[149px] pl-[5px]")}>Default</span>
      <span className={clsx(cell, "w-[132px]")} />
      <span className={clsx(cell, "w-[89px]")} />
      <span className={clsx(cell, "w-[89px]")} />
      <span className={clsx(cell, "w-[85px]")} />
      <span className={clsx(cell, "w-[87px]")} />
      <span className={clsx(cell, "w-[84px]")} />
      <span className={clsx(cell, "relative flex w-[178px] gap-1 pl-[5px]")}>
        <svg width="32" height="17" viewBox="0 0 32 17" className="mt-0.5" aria-hidden="true">
          {Array.from({ length: 8 }, (_, i) => (
            <g key={i}>
              <path d={`M${i * 4} 0h3v${11 - i}h-3z`} fill="#5c7410" />
              <path d={`M${i * 4} ${12.5 - i * 1.2}h3V17h-3z`} fill="#14405e" />
            </g>
          ))}
        </svg>
        52178/26 kb
        <svg width="12" height="12" viewBox="0 0 12 12" className="absolute right-0 bottom-0" aria-hidden="true">
          <path d="M0 12L12 0M4 12l8-8M8 12l4-4" stroke="#a0a0a0" strokeWidth="1.500" />
        </svg>
      </span>
    </footer>
  );
}

/* ---------- overlays ---------- */

function MenuItem({ label, icon, shortcut, checked, selected }: { label: string; icon?: ReactNode; shortcut?: string; checked?: boolean; selected?: boolean }) {
  return (
    <button
      type="button"
      role="menuitem"
      className={clsx("flex h-7 w-full items-center text-left", selected && "border border-[#0078d7] bg-[#bfd3e4]")}
    >
      <span className={clsx("flex h-full items-center justify-center pr-1", selected ? "w-[31px]" : "w-8 bg-[#f0f0f0]")}>
        {icon}
        {checked && (
          <svg width="11" height="11" viewBox="0 0 11 11" fill="none" aria-hidden="true">
            <path d="M1 5.500l3 3.500L10 1.500" stroke="#000" strokeWidth="2.500" />
          </svg>
        )}
      </span>
      <span className="flex-1 pl-[9px]">{label}</span>
      {shortcut && <span className="pr-[14px]">{shortcut}</span>}
    </button>
  );
}

const MenuSeparator = () => (
  <div className="flex h-3 items-center">
    <span className="h-full w-8 bg-[#f0f0f0]" />
    <span className="ml-[9px] h-px flex-1 bg-[#e8e8e8]" />
  </div>
);

function ContextMenu() {
  return (
    <div
      role="menu"
      className="absolute top-[514px] left-[700px] w-[306px] border border-[#707070] bg-white p-0.5 pt-[3px] shadow-[3px_3px_3px_rgba(0,0,0,0.45)]"
    >
      <MenuItem label="Storico completo" selected />
      <MenuItem label="Ultimi 3 mesi" />
      <MenuItem label="Ultimo Mese" />
      <MenuItem label="Periodo personalizzato..." icon={<PeriodIcon />} />
      <MenuSeparator />
      <MenuItem label="Salva come rapporto" icon={<ReportIcon />} />
      <MenuItem label="Salva come rapporto Dettagliato" />
      <MenuSeparator />
      <MenuItem label="Commissioni" />
      <MenuItem label="Tasse" />
      <MenuItem label="Commenti" />
      <MenuItem label="Disponi Automaticamente" shortcut="A" checked />
      <MenuItem label="Griglia" shortcut="G" checked />
    </div>
  );
}

function StepArrows() {
  return (
    <>
      <svg width="152" height="124" viewBox="0 0 152 124" className="absolute top-[471px] left-[562px] font-[Lato,sans-serif]" aria-hidden="true">
        <path d="M0 31q0-3 3-3h69V4q0-4 4-4 4 0 7 2l66 56q4 4 0 8l-66 54q-4 3-7 3-4 0-4-4V94H3q-3 0-3-3z" fill="#00a2e8" />
        <text x="10" y="86" fontSize="72" fontWeight="400" fill="#ed1c24" stroke="#ed1c24" strokeWidth="2">2</text>
      </svg>
      <svg width="122" height="162" viewBox="0 0 122 162" className="absolute top-[791px] left-[281px] font-[Lato,sans-serif]" aria-hidden="true">
        <path d="M28 4q0-3 3-3h59q3 0 3 3v73h25q4 0 3 4 0 2-2 5L65 159q-4 4-7 0L2 86q-2-3-2-5 0-4 4-4h24z" fill="#00a2e8" />
        <text x="41" y="72" fontSize="74" fontWeight="900" fill="#ed1c24">1</text>
      </svg>
    </>
  );
}

export default function App() {
  return (
    <div className="relative min-h-screen overflow-hidden bg-[#33456b] pt-0.5 pl-0.5 font-['Open_Sans','Noto_Sans',sans-serif] text-[14px] leading-5 text-black">
      <div className="flex flex-col bg-[#f0f0f0]">
        <TitleBar />
        <MenuBar />
        <MainToolbar />
        <DrawingToolbar />
        <main className="flex">
          <aside className="flex w-[349px] shrink-0 flex-col border-r border-[#a0a0a0]">
            <MarketWatch />
            <Navigator />
          </aside>
          <section className="min-w-0 flex-1 border-l border-[#555]">
            <PriceChart />
            <div className="h-px bg-white" />
            <ChartTabs />
          </section>
        </main>
        <Terminal />
        <StatusBar />
      </div>
      <ContextMenu />
      <StepArrows />
    </div>
  );
}
